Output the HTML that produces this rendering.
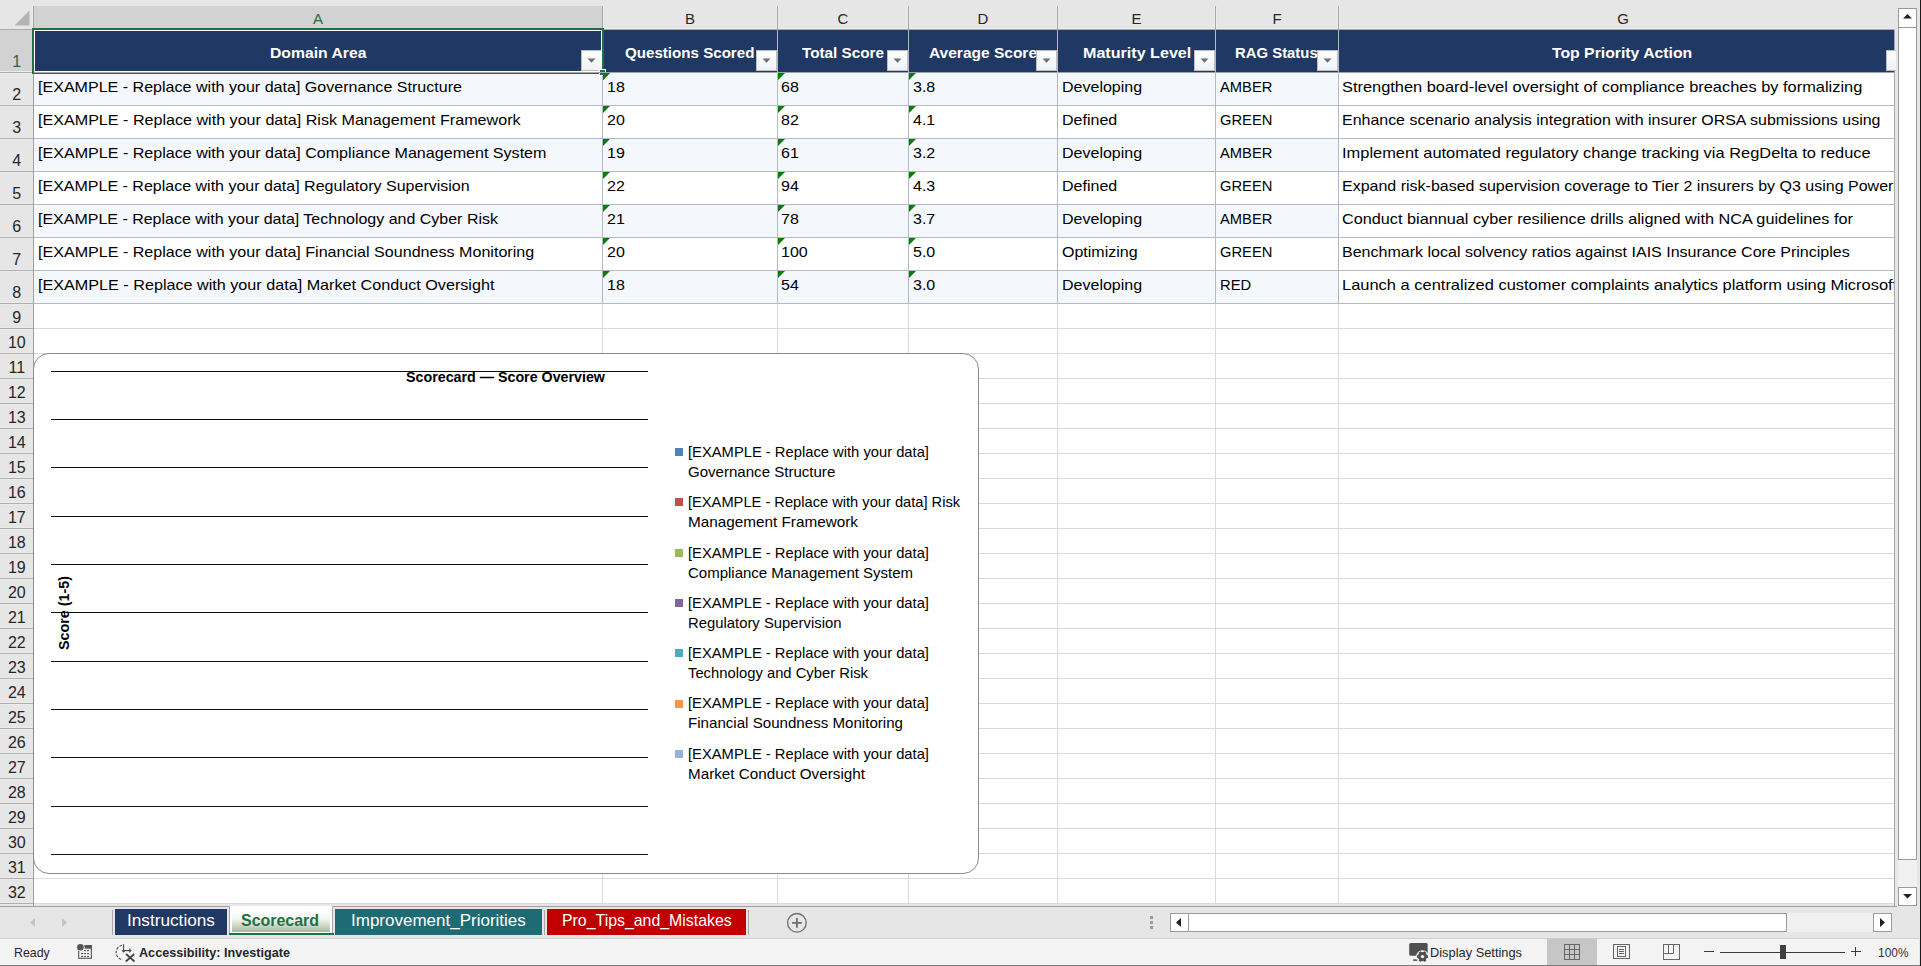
<!DOCTYPE html>
<html><head><meta charset="utf-8"><title>Scorecard</title>
<style>
html,body{margin:0;padding:0;}
body{width:1921px;height:966px;position:relative;overflow:hidden;background:#E6E6E6;font-family:"Liberation Sans",sans-serif;}
body div, body svg{position:absolute;}
body div div{position:absolute;}
.t{white-space:pre;}
</style></head><body>
<div style="left:0px;top:0px;width:1921px;height:966px;background:#E6E6E6;"></div>
<div style="left:34px;top:30px;width:1861px;height:874px;background:#FFFFFF;"></div>
<div style="left:0px;top:29px;width:1895px;height:1px;background:#ABABAB;"></div>
<div style="left:34px;top:6px;width:568px;height:23px;background:#D2D2D2;"></div>
<svg style="left:0;top:0" width="34" height="30"><polygon points="14.5,25.5 29.5,25.5 29.5,10.5" fill="#B4B4B4"/></svg>
<div style="left:34px;top:28px;width:1860px;height:1px;background:#ECECEC;"></div>
<div style="left:776px;top:6px;width:3px;height:22px;background:#ECECEC;"></div>
<div style="left:907px;top:6px;width:3px;height:22px;background:#ECECEC;"></div>
<div style="left:1056px;top:6px;width:3px;height:22px;background:#ECECEC;"></div>
<div style="left:1214px;top:6px;width:3px;height:22px;background:#ECECEC;"></div>
<div style="left:1337px;top:6px;width:3px;height:22px;background:#ECECEC;"></div>
<div style="left:603px;top:6px;width:1px;height:22px;background:#ECECEC;"></div>
<div style="left:32px;top:6px;width:1px;height:22px;background:#ECECEC;"></div>
<div style="left:34px;top:28px;width:568px;height:1px;background:#DCDCDC;"></div>
<div style="left:33px;top:6px;width:1px;height:23px;background:#A6A6A6;"></div>
<div style="left:602px;top:6px;width:1px;height:23px;background:#A6A6A6;"></div>
<div style="left:777px;top:6px;width:1px;height:23px;background:#A6A6A6;"></div>
<div style="left:908px;top:6px;width:1px;height:23px;background:#A6A6A6;"></div>
<div style="left:1057px;top:6px;width:1px;height:23px;background:#A6A6A6;"></div>
<div style="left:1215px;top:6px;width:1px;height:23px;background:#A6A6A6;"></div>
<div style="left:1338px;top:6px;width:1px;height:23px;background:#A6A6A6;"></div>
<div style="left:33px;top:30px;width:1px;height:876px;background:#A0A0A0;"></div>
<div style="left:0px;top:30px;width:33px;height:42px;background:#D2D2D2;"></div>
<div style="left:0px;top:71px;width:32px;height:1px;background:#EBEBEB;"></div>
<div style="left:0px;top:73px;width:32px;height:1px;background:#EBEBEB;"></div>
<div style="left:0px;top:72px;width:33px;height:1px;background:#AFAFAF;"></div>
<div style="left:0px;top:104px;width:32px;height:1px;background:#EBEBEB;"></div>
<div style="left:0px;top:106px;width:32px;height:1px;background:#EBEBEB;"></div>
<div style="left:0px;top:105px;width:33px;height:1px;background:#AFAFAF;"></div>
<div style="left:0px;top:137px;width:32px;height:1px;background:#EBEBEB;"></div>
<div style="left:0px;top:139px;width:32px;height:1px;background:#EBEBEB;"></div>
<div style="left:0px;top:138px;width:33px;height:1px;background:#AFAFAF;"></div>
<div style="left:0px;top:170px;width:32px;height:1px;background:#EBEBEB;"></div>
<div style="left:0px;top:172px;width:32px;height:1px;background:#EBEBEB;"></div>
<div style="left:0px;top:171px;width:33px;height:1px;background:#AFAFAF;"></div>
<div style="left:0px;top:203px;width:32px;height:1px;background:#EBEBEB;"></div>
<div style="left:0px;top:205px;width:32px;height:1px;background:#EBEBEB;"></div>
<div style="left:0px;top:204px;width:33px;height:1px;background:#AFAFAF;"></div>
<div style="left:0px;top:236px;width:32px;height:1px;background:#EBEBEB;"></div>
<div style="left:0px;top:238px;width:32px;height:1px;background:#EBEBEB;"></div>
<div style="left:0px;top:237px;width:33px;height:1px;background:#AFAFAF;"></div>
<div style="left:0px;top:269px;width:32px;height:1px;background:#EBEBEB;"></div>
<div style="left:0px;top:271px;width:32px;height:1px;background:#EBEBEB;"></div>
<div style="left:0px;top:270px;width:33px;height:1px;background:#AFAFAF;"></div>
<div style="left:0px;top:302px;width:32px;height:1px;background:#EBEBEB;"></div>
<div style="left:0px;top:304px;width:32px;height:1px;background:#EBEBEB;"></div>
<div style="left:0px;top:303px;width:33px;height:1px;background:#AFAFAF;"></div>
<div style="left:0px;top:327px;width:32px;height:1px;background:#EBEBEB;"></div>
<div style="left:0px;top:329px;width:32px;height:1px;background:#EBEBEB;"></div>
<div style="left:0px;top:328px;width:33px;height:1px;background:#AFAFAF;"></div>
<div style="left:0px;top:352px;width:32px;height:1px;background:#EBEBEB;"></div>
<div style="left:0px;top:354px;width:32px;height:1px;background:#EBEBEB;"></div>
<div style="left:0px;top:353px;width:33px;height:1px;background:#AFAFAF;"></div>
<div style="left:0px;top:377px;width:32px;height:1px;background:#EBEBEB;"></div>
<div style="left:0px;top:379px;width:32px;height:1px;background:#EBEBEB;"></div>
<div style="left:0px;top:378px;width:33px;height:1px;background:#AFAFAF;"></div>
<div style="left:0px;top:402px;width:32px;height:1px;background:#EBEBEB;"></div>
<div style="left:0px;top:404px;width:32px;height:1px;background:#EBEBEB;"></div>
<div style="left:0px;top:403px;width:33px;height:1px;background:#AFAFAF;"></div>
<div style="left:0px;top:427px;width:32px;height:1px;background:#EBEBEB;"></div>
<div style="left:0px;top:429px;width:32px;height:1px;background:#EBEBEB;"></div>
<div style="left:0px;top:428px;width:33px;height:1px;background:#AFAFAF;"></div>
<div style="left:0px;top:452px;width:32px;height:1px;background:#EBEBEB;"></div>
<div style="left:0px;top:454px;width:32px;height:1px;background:#EBEBEB;"></div>
<div style="left:0px;top:453px;width:33px;height:1px;background:#AFAFAF;"></div>
<div style="left:0px;top:477px;width:32px;height:1px;background:#EBEBEB;"></div>
<div style="left:0px;top:479px;width:32px;height:1px;background:#EBEBEB;"></div>
<div style="left:0px;top:478px;width:33px;height:1px;background:#AFAFAF;"></div>
<div style="left:0px;top:502px;width:32px;height:1px;background:#EBEBEB;"></div>
<div style="left:0px;top:504px;width:32px;height:1px;background:#EBEBEB;"></div>
<div style="left:0px;top:503px;width:33px;height:1px;background:#AFAFAF;"></div>
<div style="left:0px;top:527px;width:32px;height:1px;background:#EBEBEB;"></div>
<div style="left:0px;top:529px;width:32px;height:1px;background:#EBEBEB;"></div>
<div style="left:0px;top:528px;width:33px;height:1px;background:#AFAFAF;"></div>
<div style="left:0px;top:552px;width:32px;height:1px;background:#EBEBEB;"></div>
<div style="left:0px;top:554px;width:32px;height:1px;background:#EBEBEB;"></div>
<div style="left:0px;top:553px;width:33px;height:1px;background:#AFAFAF;"></div>
<div style="left:0px;top:577px;width:32px;height:1px;background:#EBEBEB;"></div>
<div style="left:0px;top:579px;width:32px;height:1px;background:#EBEBEB;"></div>
<div style="left:0px;top:578px;width:33px;height:1px;background:#AFAFAF;"></div>
<div style="left:0px;top:602px;width:32px;height:1px;background:#EBEBEB;"></div>
<div style="left:0px;top:604px;width:32px;height:1px;background:#EBEBEB;"></div>
<div style="left:0px;top:603px;width:33px;height:1px;background:#AFAFAF;"></div>
<div style="left:0px;top:627px;width:32px;height:1px;background:#EBEBEB;"></div>
<div style="left:0px;top:629px;width:32px;height:1px;background:#EBEBEB;"></div>
<div style="left:0px;top:628px;width:33px;height:1px;background:#AFAFAF;"></div>
<div style="left:0px;top:652px;width:32px;height:1px;background:#EBEBEB;"></div>
<div style="left:0px;top:654px;width:32px;height:1px;background:#EBEBEB;"></div>
<div style="left:0px;top:653px;width:33px;height:1px;background:#AFAFAF;"></div>
<div style="left:0px;top:677px;width:32px;height:1px;background:#EBEBEB;"></div>
<div style="left:0px;top:679px;width:32px;height:1px;background:#EBEBEB;"></div>
<div style="left:0px;top:678px;width:33px;height:1px;background:#AFAFAF;"></div>
<div style="left:0px;top:702px;width:32px;height:1px;background:#EBEBEB;"></div>
<div style="left:0px;top:704px;width:32px;height:1px;background:#EBEBEB;"></div>
<div style="left:0px;top:703px;width:33px;height:1px;background:#AFAFAF;"></div>
<div style="left:0px;top:727px;width:32px;height:1px;background:#EBEBEB;"></div>
<div style="left:0px;top:729px;width:32px;height:1px;background:#EBEBEB;"></div>
<div style="left:0px;top:728px;width:33px;height:1px;background:#AFAFAF;"></div>
<div style="left:0px;top:752px;width:32px;height:1px;background:#EBEBEB;"></div>
<div style="left:0px;top:754px;width:32px;height:1px;background:#EBEBEB;"></div>
<div style="left:0px;top:753px;width:33px;height:1px;background:#AFAFAF;"></div>
<div style="left:0px;top:777px;width:32px;height:1px;background:#EBEBEB;"></div>
<div style="left:0px;top:779px;width:32px;height:1px;background:#EBEBEB;"></div>
<div style="left:0px;top:778px;width:33px;height:1px;background:#AFAFAF;"></div>
<div style="left:0px;top:802px;width:32px;height:1px;background:#EBEBEB;"></div>
<div style="left:0px;top:804px;width:32px;height:1px;background:#EBEBEB;"></div>
<div style="left:0px;top:803px;width:33px;height:1px;background:#AFAFAF;"></div>
<div style="left:0px;top:827px;width:32px;height:1px;background:#EBEBEB;"></div>
<div style="left:0px;top:829px;width:32px;height:1px;background:#EBEBEB;"></div>
<div style="left:0px;top:828px;width:33px;height:1px;background:#AFAFAF;"></div>
<div style="left:0px;top:852px;width:32px;height:1px;background:#EBEBEB;"></div>
<div style="left:0px;top:854px;width:32px;height:1px;background:#EBEBEB;"></div>
<div style="left:0px;top:853px;width:33px;height:1px;background:#AFAFAF;"></div>
<div style="left:0px;top:877px;width:32px;height:1px;background:#EBEBEB;"></div>
<div style="left:0px;top:879px;width:32px;height:1px;background:#EBEBEB;"></div>
<div style="left:0px;top:878px;width:33px;height:1px;background:#AFAFAF;"></div>
<div style="left:0px;top:902px;width:32px;height:1px;background:#EBEBEB;"></div>
<div style="left:0px;top:904px;width:32px;height:1px;background:#EBEBEB;"></div>
<div style="left:0px;top:903px;width:33px;height:1px;background:#AFAFAF;"></div>
<div style="left:34px;top:328px;width:1861px;height:1px;background:#DADADA;"></div>
<div style="left:34px;top:353px;width:1861px;height:1px;background:#DADADA;"></div>
<div style="left:34px;top:378px;width:1861px;height:1px;background:#DADADA;"></div>
<div style="left:34px;top:403px;width:1861px;height:1px;background:#DADADA;"></div>
<div style="left:34px;top:428px;width:1861px;height:1px;background:#DADADA;"></div>
<div style="left:34px;top:453px;width:1861px;height:1px;background:#DADADA;"></div>
<div style="left:34px;top:478px;width:1861px;height:1px;background:#DADADA;"></div>
<div style="left:34px;top:503px;width:1861px;height:1px;background:#DADADA;"></div>
<div style="left:34px;top:528px;width:1861px;height:1px;background:#DADADA;"></div>
<div style="left:34px;top:553px;width:1861px;height:1px;background:#DADADA;"></div>
<div style="left:34px;top:578px;width:1861px;height:1px;background:#DADADA;"></div>
<div style="left:34px;top:603px;width:1861px;height:1px;background:#DADADA;"></div>
<div style="left:34px;top:628px;width:1861px;height:1px;background:#DADADA;"></div>
<div style="left:34px;top:653px;width:1861px;height:1px;background:#DADADA;"></div>
<div style="left:34px;top:678px;width:1861px;height:1px;background:#DADADA;"></div>
<div style="left:34px;top:703px;width:1861px;height:1px;background:#DADADA;"></div>
<div style="left:34px;top:728px;width:1861px;height:1px;background:#DADADA;"></div>
<div style="left:34px;top:753px;width:1861px;height:1px;background:#DADADA;"></div>
<div style="left:34px;top:778px;width:1861px;height:1px;background:#DADADA;"></div>
<div style="left:34px;top:803px;width:1861px;height:1px;background:#DADADA;"></div>
<div style="left:34px;top:828px;width:1861px;height:1px;background:#DADADA;"></div>
<div style="left:34px;top:853px;width:1861px;height:1px;background:#DADADA;"></div>
<div style="left:34px;top:878px;width:1861px;height:1px;background:#DADADA;"></div>
<div style="left:34px;top:903px;width:1861px;height:1px;background:#DADADA;"></div>
<div style="left:602px;top:304px;width:1px;height:600px;background:#DADADA;"></div>
<div style="left:777px;top:304px;width:1px;height:600px;background:#DADADA;"></div>
<div style="left:908px;top:304px;width:1px;height:600px;background:#DADADA;"></div>
<div style="left:1057px;top:304px;width:1px;height:600px;background:#DADADA;"></div>
<div style="left:1215px;top:304px;width:1px;height:600px;background:#DADADA;"></div>
<div style="left:1338px;top:304px;width:1px;height:600px;background:#DADADA;"></div>
<div style="left:34px;top:30px;width:1861px;height:42px;background:#203864;"></div>
<div style="left:34px;top:73px;width:1304px;height:32px;background:#F4F7FC;"></div>
<div style="left:34px;top:139px;width:1304px;height:32px;background:#F4F7FC;"></div>
<div style="left:34px;top:205px;width:1304px;height:32px;background:#F4F7FC;"></div>
<div style="left:34px;top:271px;width:1304px;height:32px;background:#F4F7FC;"></div>
<div style="left:34px;top:105px;width:1861px;height:1px;background:#B3BAC6;"></div>
<div style="left:34px;top:138px;width:1861px;height:1px;background:#B3BAC6;"></div>
<div style="left:34px;top:171px;width:1861px;height:1px;background:#B3BAC6;"></div>
<div style="left:34px;top:204px;width:1861px;height:1px;background:#B3BAC6;"></div>
<div style="left:34px;top:237px;width:1861px;height:1px;background:#B3BAC6;"></div>
<div style="left:34px;top:270px;width:1861px;height:1px;background:#B3BAC6;"></div>
<div style="left:34px;top:303px;width:1861px;height:1px;background:#B3BAC6;"></div>
<div style="left:34px;top:72px;width:1861px;height:1px;background:#9FA5AE;"></div>
<div style="left:602px;top:30px;width:1px;height:273px;background:#B3BAC6;"></div>
<div style="left:777px;top:30px;width:1px;height:273px;background:#B3BAC6;"></div>
<div style="left:908px;top:30px;width:1px;height:273px;background:#B3BAC6;"></div>
<div style="left:1057px;top:30px;width:1px;height:273px;background:#B3BAC6;"></div>
<div style="left:1215px;top:30px;width:1px;height:273px;background:#B3BAC6;"></div>
<div style="left:1338px;top:30px;width:1px;height:273px;background:#B3BAC6;"></div>
<div style="left:34px;top:903px;width:1861px;height:1px;background:#DADADA;"></div>
<div style="left:0px;top:906px;width:1897px;height:1px;background:#A0A0A0;"></div>
<div style="left:1894px;top:30px;width:1px;height:876px;background:#A6A6A6;"></div>
<div class="t" style="left:313.00px;top:11.00px;font-size:15px;line-height:15px;color:#1F6E43;">A</div>
<div class="t" style="left:685.00px;top:11.00px;font-size:15px;line-height:15px;color:#262626;">B</div>
<div class="t" style="left:837.59px;top:11.00px;font-size:15px;line-height:15px;color:#262626;">C</div>
<div class="t" style="left:977.59px;top:11.00px;font-size:15px;line-height:15px;color:#262626;">D</div>
<div class="t" style="left:1131.50px;top:11.00px;font-size:15px;line-height:15px;color:#262626;">E</div>
<div class="t" style="left:1272.42px;top:11.00px;font-size:15px;line-height:15px;color:#262626;">F</div>
<div class="t" style="left:1617.16px;top:11.00px;font-size:15px;line-height:15px;color:#262626;">G</div>
<div class="t" style="left:12.35px;top:54.00px;font-size:16px;line-height:16px;color:#1F6E43;">1</div>
<div class="t" style="left:12.35px;top:87.00px;font-size:16px;line-height:16px;color:#262626;">2</div>
<div class="t" style="left:12.35px;top:120.00px;font-size:16px;line-height:16px;color:#262626;">3</div>
<div class="t" style="left:12.35px;top:153.00px;font-size:16px;line-height:16px;color:#262626;">4</div>
<div class="t" style="left:12.35px;top:186.00px;font-size:16px;line-height:16px;color:#262626;">5</div>
<div class="t" style="left:12.35px;top:219.00px;font-size:16px;line-height:16px;color:#262626;">6</div>
<div class="t" style="left:12.35px;top:252.00px;font-size:16px;line-height:16px;color:#262626;">7</div>
<div class="t" style="left:12.35px;top:285.00px;font-size:16px;line-height:16px;color:#262626;">8</div>
<div class="t" style="left:12.35px;top:310.00px;font-size:16px;line-height:16px;color:#262626;">9</div>
<div class="t" style="left:7.89px;top:335.00px;font-size:16px;line-height:16px;color:#262626;">10</div>
<div class="t" style="left:8.49px;top:360.00px;font-size:16px;line-height:16px;color:#262626;">11</div>
<div class="t" style="left:7.89px;top:385.00px;font-size:16px;line-height:16px;color:#262626;">12</div>
<div class="t" style="left:7.89px;top:410.00px;font-size:16px;line-height:16px;color:#262626;">13</div>
<div class="t" style="left:7.89px;top:435.00px;font-size:16px;line-height:16px;color:#262626;">14</div>
<div class="t" style="left:7.89px;top:460.00px;font-size:16px;line-height:16px;color:#262626;">15</div>
<div class="t" style="left:7.89px;top:485.00px;font-size:16px;line-height:16px;color:#262626;">16</div>
<div class="t" style="left:7.89px;top:510.00px;font-size:16px;line-height:16px;color:#262626;">17</div>
<div class="t" style="left:7.89px;top:535.00px;font-size:16px;line-height:16px;color:#262626;">18</div>
<div class="t" style="left:7.89px;top:560.00px;font-size:16px;line-height:16px;color:#262626;">19</div>
<div class="t" style="left:7.89px;top:585.00px;font-size:16px;line-height:16px;color:#262626;">20</div>
<div class="t" style="left:7.89px;top:610.00px;font-size:16px;line-height:16px;color:#262626;">21</div>
<div class="t" style="left:7.89px;top:635.00px;font-size:16px;line-height:16px;color:#262626;">22</div>
<div class="t" style="left:7.89px;top:660.00px;font-size:16px;line-height:16px;color:#262626;">23</div>
<div class="t" style="left:7.89px;top:685.00px;font-size:16px;line-height:16px;color:#262626;">24</div>
<div class="t" style="left:7.89px;top:710.00px;font-size:16px;line-height:16px;color:#262626;">25</div>
<div class="t" style="left:7.89px;top:735.00px;font-size:16px;line-height:16px;color:#262626;">26</div>
<div class="t" style="left:7.89px;top:760.00px;font-size:16px;line-height:16px;color:#262626;">27</div>
<div class="t" style="left:7.89px;top:785.00px;font-size:16px;line-height:16px;color:#262626;">28</div>
<div class="t" style="left:7.89px;top:810.00px;font-size:16px;line-height:16px;color:#262626;">29</div>
<div class="t" style="left:7.89px;top:835.00px;font-size:16px;line-height:16px;color:#262626;">30</div>
<div class="t" style="left:7.89px;top:860.00px;font-size:16px;line-height:16px;color:#262626;">31</div>
<div class="t" style="left:7.89px;top:885.00px;font-size:16px;line-height:16px;color:#262626;">32</div>
<div class="t" style="left:269.75px;top:45.00px;font-size:15px;line-height:15px;color:#FFFFFF;font-weight:bold;transform:scaleX(1.0493);transform-origin:0 0;">Domain Area</div>
<div class="t" style="left:624.50px;top:45.00px;font-size:15px;line-height:15px;color:#FFFFFF;font-weight:bold;transform:scaleX(1.0081);transform-origin:0 0;">Questions Scored</div>
<div class="t" style="left:802.00px;top:45.00px;font-size:15px;line-height:15px;color:#FFFFFF;font-weight:bold;transform:scaleX(1.0176);transform-origin:0 0;">Total Score</div>
<div class="t" style="left:929.00px;top:45.00px;font-size:15px;line-height:15px;color:#FFFFFF;font-weight:bold;transform:scaleX(1.0335);transform-origin:0 0;">Average Score</div>
<div class="t" style="left:1082.65px;top:45.00px;font-size:15px;line-height:15px;color:#FFFFFF;font-weight:bold;transform:scaleX(1.0734);transform-origin:0 0;">Maturity Level</div>
<div class="t" style="left:1235.35px;top:45.00px;font-size:15px;line-height:15px;color:#FFFFFF;font-weight:bold;transform:scaleX(0.9923);transform-origin:0 0;">RAG Status</div>
<div class="t" style="left:1552.20px;top:45.00px;font-size:15px;line-height:15px;color:#FFFFFF;font-weight:bold;transform:scaleX(1.0515);transform-origin:0 0;">Top Priority Action</div>
<div style="left:581px;top:50px;width:19px;height:19px;border:1px solid #BEBEBE;background:linear-gradient(#FFFFFF,#EEF1F6)"></div>
<svg style="left:587px;top:58px" width="9" height="6"><polygon points="0.5,0.5 8.5,0.5 4.5,4.8" fill="#6E6E6E"/></svg>
<div style="left:756px;top:50px;width:19px;height:19px;border:1px solid #BEBEBE;background:linear-gradient(#FFFFFF,#EEF1F6)"></div>
<svg style="left:762px;top:58px" width="9" height="6"><polygon points="0.5,0.5 8.5,0.5 4.5,4.8" fill="#6E6E6E"/></svg>
<div style="left:887px;top:50px;width:19px;height:19px;border:1px solid #BEBEBE;background:linear-gradient(#FFFFFF,#EEF1F6)"></div>
<svg style="left:893px;top:58px" width="9" height="6"><polygon points="0.5,0.5 8.5,0.5 4.5,4.8" fill="#6E6E6E"/></svg>
<div style="left:1036px;top:50px;width:19px;height:19px;border:1px solid #BEBEBE;background:linear-gradient(#FFFFFF,#EEF1F6)"></div>
<svg style="left:1042px;top:58px" width="9" height="6"><polygon points="0.5,0.5 8.5,0.5 4.5,4.8" fill="#6E6E6E"/></svg>
<div style="left:1194px;top:50px;width:19px;height:19px;border:1px solid #BEBEBE;background:linear-gradient(#FFFFFF,#EEF1F6)"></div>
<svg style="left:1200px;top:58px" width="9" height="6"><polygon points="0.5,0.5 8.5,0.5 4.5,4.8" fill="#6E6E6E"/></svg>
<div style="left:1317px;top:50px;width:19px;height:19px;border:1px solid #BEBEBE;background:linear-gradient(#FFFFFF,#EEF1F6)"></div>
<svg style="left:1323px;top:58px" width="9" height="6"><polygon points="0.5,0.5 8.5,0.5 4.5,4.8" fill="#6E6E6E"/></svg>
<div style="left:1886px;top:50px;width:9px;height:19px;border:1px solid #BEBEBE;border-right:none;background:linear-gradient(#FFFFFF,#EEF1F6)"></div>
<div class="t" style="left:38.00px;top:79.00px;font-size:15px;line-height:15px;color:#000;transform:scaleX(1.0705);transform-origin:0 0;">[EXAMPLE - Replace with your data] Governance Structure</div>
<div class="t" style="left:606.50px;top:79.00px;font-size:15px;line-height:15px;color:#000;transform:scaleX(1.0674);transform-origin:0 0;">18</div>
<div class="t" style="left:781.00px;top:79.00px;font-size:15px;line-height:15px;color:#000;transform:scaleX(1.0674);transform-origin:0 0;">68</div>
<div class="t" style="left:912.50px;top:79.00px;font-size:15px;line-height:15px;color:#000;transform:scaleX(1.0674);transform-origin:0 0;">3.8</div>
<div class="t" style="left:1061.50px;top:79.00px;font-size:15px;line-height:15px;color:#000;transform:scaleX(1.0677);transform-origin:0 0;">Developing</div>
<div class="t" style="left:1219.50px;top:79.00px;font-size:15px;line-height:15px;color:#000;transform:scaleX(0.9817);transform-origin:0 0;">AMBER</div>
<div style="left:1339px;top:73px;width:555px;height:32px;overflow:hidden">
<div class="t" style="left:2.5px;top:6px;font-size:15px;line-height:15px;transform:scaleX(1.0928);transform-origin:0 0">Strengthen board-level oversight of compliance breaches by formalizing</div>
</div>
<svg style="left:603px;top:73px" width="8" height="8"><polygon points="0,0 7,0 0,7" fill="#008000"/></svg>
<svg style="left:778px;top:73px" width="8" height="8"><polygon points="0,0 7,0 0,7" fill="#008000"/></svg>
<svg style="left:909px;top:73px" width="8" height="8"><polygon points="0,0 7,0 0,7" fill="#008000"/></svg>
<div class="t" style="left:38.00px;top:112.00px;font-size:15px;line-height:15px;color:#000;transform:scaleX(1.0739);transform-origin:0 0;">[EXAMPLE - Replace with your data] Risk Management Framework</div>
<div class="t" style="left:606.50px;top:112.00px;font-size:15px;line-height:15px;color:#000;transform:scaleX(1.0674);transform-origin:0 0;">20</div>
<div class="t" style="left:781.00px;top:112.00px;font-size:15px;line-height:15px;color:#000;transform:scaleX(1.0674);transform-origin:0 0;">82</div>
<div class="t" style="left:912.50px;top:112.00px;font-size:15px;line-height:15px;color:#000;transform:scaleX(1.0674);transform-origin:0 0;">4.1</div>
<div class="t" style="left:1061.50px;top:112.00px;font-size:15px;line-height:15px;color:#000;transform:scaleX(1.0677);transform-origin:0 0;">Defined</div>
<div class="t" style="left:1219.50px;top:112.00px;font-size:15px;line-height:15px;color:#000;transform:scaleX(0.9820);transform-origin:0 0;">GREEN</div>
<div style="left:1339px;top:106px;width:555px;height:32px;overflow:hidden">
<div class="t" style="left:2.5px;top:6px;font-size:15px;line-height:15px;transform:scaleX(1.0639);transform-origin:0 0">Enhance scenario analysis integration with insurer ORSA submissions using</div>
</div>
<svg style="left:603px;top:106px" width="8" height="8"><polygon points="0,0 7,0 0,7" fill="#008000"/></svg>
<svg style="left:778px;top:106px" width="8" height="8"><polygon points="0,0 7,0 0,7" fill="#008000"/></svg>
<svg style="left:909px;top:106px" width="8" height="8"><polygon points="0,0 7,0 0,7" fill="#008000"/></svg>
<div class="t" style="left:38.00px;top:145.00px;font-size:15px;line-height:15px;color:#000;transform:scaleX(1.0718);transform-origin:0 0;">[EXAMPLE - Replace with your data] Compliance Management System</div>
<div class="t" style="left:606.50px;top:145.00px;font-size:15px;line-height:15px;color:#000;transform:scaleX(1.0674);transform-origin:0 0;">19</div>
<div class="t" style="left:781.00px;top:145.00px;font-size:15px;line-height:15px;color:#000;transform:scaleX(1.0674);transform-origin:0 0;">61</div>
<div class="t" style="left:912.50px;top:145.00px;font-size:15px;line-height:15px;color:#000;transform:scaleX(1.0674);transform-origin:0 0;">3.2</div>
<div class="t" style="left:1061.50px;top:145.00px;font-size:15px;line-height:15px;color:#000;transform:scaleX(1.0677);transform-origin:0 0;">Developing</div>
<div class="t" style="left:1219.50px;top:145.00px;font-size:15px;line-height:15px;color:#000;transform:scaleX(0.9817);transform-origin:0 0;">AMBER</div>
<div style="left:1339px;top:139px;width:555px;height:32px;overflow:hidden">
<div class="t" style="left:2.5px;top:6px;font-size:15px;line-height:15px;transform:scaleX(1.0951);transform-origin:0 0">Implement automated regulatory change tracking via RegDelta to reduce</div>
</div>
<svg style="left:603px;top:139px" width="8" height="8"><polygon points="0,0 7,0 0,7" fill="#008000"/></svg>
<svg style="left:778px;top:139px" width="8" height="8"><polygon points="0,0 7,0 0,7" fill="#008000"/></svg>
<svg style="left:909px;top:139px" width="8" height="8"><polygon points="0,0 7,0 0,7" fill="#008000"/></svg>
<div class="t" style="left:38.00px;top:178.00px;font-size:15px;line-height:15px;color:#000;transform:scaleX(1.0675);transform-origin:0 0;">[EXAMPLE - Replace with your data] Regulatory Supervision</div>
<div class="t" style="left:606.50px;top:178.00px;font-size:15px;line-height:15px;color:#000;transform:scaleX(1.0674);transform-origin:0 0;">22</div>
<div class="t" style="left:781.00px;top:178.00px;font-size:15px;line-height:15px;color:#000;transform:scaleX(1.0674);transform-origin:0 0;">94</div>
<div class="t" style="left:912.50px;top:178.00px;font-size:15px;line-height:15px;color:#000;transform:scaleX(1.0674);transform-origin:0 0;">4.3</div>
<div class="t" style="left:1061.50px;top:178.00px;font-size:15px;line-height:15px;color:#000;transform:scaleX(1.0677);transform-origin:0 0;">Defined</div>
<div class="t" style="left:1219.50px;top:178.00px;font-size:15px;line-height:15px;color:#000;transform:scaleX(0.9820);transform-origin:0 0;">GREEN</div>
<div style="left:1339px;top:172px;width:555px;height:32px;overflow:hidden">
<div class="t" style="left:2.5px;top:6px;font-size:15px;line-height:15px;transform:scaleX(1.0667);transform-origin:0 0">Expand risk-based supervision coverage to Tier 2 insurers by Q3 using Power</div>
</div>
<svg style="left:603px;top:172px" width="8" height="8"><polygon points="0,0 7,0 0,7" fill="#008000"/></svg>
<svg style="left:778px;top:172px" width="8" height="8"><polygon points="0,0 7,0 0,7" fill="#008000"/></svg>
<svg style="left:909px;top:172px" width="8" height="8"><polygon points="0,0 7,0 0,7" fill="#008000"/></svg>
<div class="t" style="left:38.00px;top:211.00px;font-size:15px;line-height:15px;color:#000;transform:scaleX(1.0657);transform-origin:0 0;">[EXAMPLE - Replace with your data] Technology and Cyber Risk</div>
<div class="t" style="left:606.50px;top:211.00px;font-size:15px;line-height:15px;color:#000;transform:scaleX(1.0674);transform-origin:0 0;">21</div>
<div class="t" style="left:781.00px;top:211.00px;font-size:15px;line-height:15px;color:#000;transform:scaleX(1.0674);transform-origin:0 0;">78</div>
<div class="t" style="left:912.50px;top:211.00px;font-size:15px;line-height:15px;color:#000;transform:scaleX(1.0674);transform-origin:0 0;">3.7</div>
<div class="t" style="left:1061.50px;top:211.00px;font-size:15px;line-height:15px;color:#000;transform:scaleX(1.0677);transform-origin:0 0;">Developing</div>
<div class="t" style="left:1219.50px;top:211.00px;font-size:15px;line-height:15px;color:#000;transform:scaleX(0.9817);transform-origin:0 0;">AMBER</div>
<div style="left:1339px;top:205px;width:555px;height:32px;overflow:hidden">
<div class="t" style="left:2.5px;top:6px;font-size:15px;line-height:15px;transform:scaleX(1.0827);transform-origin:0 0">Conduct biannual cyber resilience drills aligned with NCA guidelines for</div>
</div>
<svg style="left:603px;top:205px" width="8" height="8"><polygon points="0,0 7,0 0,7" fill="#008000"/></svg>
<svg style="left:778px;top:205px" width="8" height="8"><polygon points="0,0 7,0 0,7" fill="#008000"/></svg>
<svg style="left:909px;top:205px" width="8" height="8"><polygon points="0,0 7,0 0,7" fill="#008000"/></svg>
<div class="t" style="left:38.00px;top:244.00px;font-size:15px;line-height:15px;color:#000;transform:scaleX(1.0722);transform-origin:0 0;">[EXAMPLE - Replace with your data] Financial Soundness Monitoring</div>
<div class="t" style="left:606.50px;top:244.00px;font-size:15px;line-height:15px;color:#000;transform:scaleX(1.0674);transform-origin:0 0;">20</div>
<div class="t" style="left:781.00px;top:244.00px;font-size:15px;line-height:15px;color:#000;transform:scaleX(1.0674);transform-origin:0 0;">100</div>
<div class="t" style="left:912.50px;top:244.00px;font-size:15px;line-height:15px;color:#000;transform:scaleX(1.0674);transform-origin:0 0;">5.0</div>
<div class="t" style="left:1061.50px;top:244.00px;font-size:15px;line-height:15px;color:#000;transform:scaleX(1.0675);transform-origin:0 0;">Optimizing</div>
<div class="t" style="left:1219.50px;top:244.00px;font-size:15px;line-height:15px;color:#000;transform:scaleX(0.9820);transform-origin:0 0;">GREEN</div>
<div style="left:1339px;top:238px;width:555px;height:32px;overflow:hidden">
<div class="t" style="left:2.5px;top:6px;font-size:15px;line-height:15px;transform:scaleX(1.0684);transform-origin:0 0">Benchmark local solvency ratios against IAIS Insurance Core Principles</div>
</div>
<svg style="left:603px;top:238px" width="8" height="8"><polygon points="0,0 7,0 0,7" fill="#008000"/></svg>
<svg style="left:778px;top:238px" width="8" height="8"><polygon points="0,0 7,0 0,7" fill="#008000"/></svg>
<svg style="left:909px;top:238px" width="8" height="8"><polygon points="0,0 7,0 0,7" fill="#008000"/></svg>
<div class="t" style="left:38.00px;top:277.00px;font-size:15px;line-height:15px;color:#000;transform:scaleX(1.0777);transform-origin:0 0;">[EXAMPLE - Replace with your data] Market Conduct Oversight</div>
<div class="t" style="left:606.50px;top:277.00px;font-size:15px;line-height:15px;color:#000;transform:scaleX(1.0674);transform-origin:0 0;">18</div>
<div class="t" style="left:781.00px;top:277.00px;font-size:15px;line-height:15px;color:#000;transform:scaleX(1.0674);transform-origin:0 0;">54</div>
<div class="t" style="left:912.50px;top:277.00px;font-size:15px;line-height:15px;color:#000;transform:scaleX(1.0674);transform-origin:0 0;">3.0</div>
<div class="t" style="left:1061.50px;top:277.00px;font-size:15px;line-height:15px;color:#000;transform:scaleX(1.0677);transform-origin:0 0;">Developing</div>
<div class="t" style="left:1219.50px;top:277.00px;font-size:15px;line-height:15px;color:#000;transform:scaleX(0.9822);transform-origin:0 0;">RED</div>
<div style="left:1339px;top:271px;width:555px;height:32px;overflow:hidden">
<div class="t" style="left:2.5px;top:6px;font-size:15px;line-height:15px;transform:scaleX(1.0971);transform-origin:0 0">Launch a centralized customer complaints analytics platform using Microsoft</div>
</div>
<svg style="left:603px;top:271px" width="8" height="8"><polygon points="0,0 7,0 0,7" fill="#008000"/></svg>
<svg style="left:778px;top:271px" width="8" height="8"><polygon points="0,0 7,0 0,7" fill="#008000"/></svg>
<svg style="left:909px;top:271px" width="8" height="8"><polygon points="0,0 7,0 0,7" fill="#008000"/></svg>
<div style="left:32px;top:28px;width:572px;height:2px;background:#1E7145;"></div>
<div style="left:32px;top:28px;width:2px;height:46px;background:#1E7145;"></div>
<div style="left:602px;top:28px;width:2px;height:41px;background:#1E7145;"></div>
<div style="left:32px;top:73px;width:567px;height:1px;background:#1E7145;"></div>
<div style="left:34px;top:30px;width:568px;height:1px;background:#FFFFFF;"></div>
<div style="left:34px;top:71px;width:568px;height:1px;background:#FFFFFF;"></div>
<div style="left:34px;top:30px;width:1px;height:42px;background:#FFFFFF;"></div>
<div style="left:601px;top:30px;width:1px;height:42px;background:#FFFFFF;"></div>
<div style="left:599px;top:69px;width:7px;height:7px;background:#FFFFFF;"></div>
<div style="left:600px;top:70px;width:5px;height:5px;background:#1E7145;"></div>
<div style="left:34px;top:72px;width:572px;height:1px;background:#A3A8B0;"></div>
<svg style="left:603px;top:73px" width="8" height="8"><polygon points="0,0 7,0 0,7" fill="#008000"/></svg>
<div style="left:33px;top:353px;width:944px;height:519px;border:1px solid #8A8A8A;border-radius:16px;background:#FFFFFF"></div>
<div style="left:51px;top:371px;width:597px;height:1px;background:#0D0D0D;"></div>
<div style="left:51px;top:419px;width:597px;height:1px;background:#0D0D0D;"></div>
<div style="left:51px;top:467px;width:597px;height:1px;background:#0D0D0D;"></div>
<div style="left:51px;top:516px;width:597px;height:1px;background:#0D0D0D;"></div>
<div style="left:51px;top:564px;width:597px;height:1px;background:#0D0D0D;"></div>
<div style="left:51px;top:612px;width:597px;height:1px;background:#0D0D0D;"></div>
<div style="left:51px;top:661px;width:597px;height:1px;background:#0D0D0D;"></div>
<div style="left:51px;top:709px;width:597px;height:1px;background:#0D0D0D;"></div>
<div style="left:51px;top:757px;width:597px;height:1px;background:#0D0D0D;"></div>
<div style="left:51px;top:806px;width:597px;height:1px;background:#0D0D0D;"></div>
<div style="left:51px;top:854px;width:597px;height:1px;background:#0D0D0D;"></div>
<div class="t" style="left:406.00px;top:369.00px;font-size:15px;line-height:15px;color:#000;font-weight:bold;transform:scaleX(0.9507);transform-origin:0 0;">Scorecard — Score Overview</div>
<div class="t" style="left:63px;top:612.5px;width:0;height:0"><div class="t" style="left:0;top:0;transform:translate(-50%,-50%) rotate(-90deg) scaleX(0.955);font-size:15px;line-height:15px;font-weight:bold;white-space:nowrap">Score (1-5)</div></div>
<div style="left:675px;top:448.0px;width:8px;height:8px;background:#4F81BD"></div>
<div class="t" style="left:688.00px;top:444.00px;font-size:15px;line-height:15px;color:#000000;transform:scaleX(0.9831);transform-origin:0 0;">[EXAMPLE - Replace with your data]</div>
<div class="t" style="left:688.00px;top:464.00px;font-size:15px;line-height:15px;color:#000000;transform:scaleX(1.0035);transform-origin:0 0;">Governance Structure</div>
<div style="left:675px;top:498.3px;width:8px;height:8px;background:#C0504D"></div>
<div class="t" style="left:688.00px;top:494.00px;font-size:15px;line-height:15px;color:#000000;transform:scaleX(0.9771);transform-origin:0 0;">[EXAMPLE - Replace with your data] Risk</div>
<div class="t" style="left:688.00px;top:514.00px;font-size:15px;line-height:15px;color:#000000;transform:scaleX(1.0194);transform-origin:0 0;">Management Framework</div>
<div style="left:675px;top:548.6px;width:8px;height:8px;background:#9BBB59"></div>
<div class="t" style="left:688.00px;top:545.00px;font-size:15px;line-height:15px;color:#000000;transform:scaleX(0.9831);transform-origin:0 0;">[EXAMPLE - Replace with your data]</div>
<div class="t" style="left:688.00px;top:565.00px;font-size:15px;line-height:15px;color:#000000;">Compliance Management System</div>
<div style="left:675px;top:598.9px;width:8px;height:8px;background:#8064A2"></div>
<div class="t" style="left:688.00px;top:595.00px;font-size:15px;line-height:15px;color:#000000;transform:scaleX(0.9831);transform-origin:0 0;">[EXAMPLE - Replace with your data]</div>
<div class="t" style="left:688.00px;top:615.00px;font-size:15px;line-height:15px;color:#000000;transform:scaleX(0.9897);transform-origin:0 0;">Regulatory Supervision</div>
<div style="left:675px;top:649.2px;width:8px;height:8px;background:#4BACC6"></div>
<div class="t" style="left:688.00px;top:645.00px;font-size:15px;line-height:15px;color:#000000;transform:scaleX(0.9831);transform-origin:0 0;">[EXAMPLE - Replace with your data]</div>
<div class="t" style="left:688.00px;top:665.00px;font-size:15px;line-height:15px;color:#000000;transform:scaleX(0.9857);transform-origin:0 0;">Technology and Cyber Risk</div>
<div style="left:675px;top:699.5px;width:8px;height:8px;background:#F79646"></div>
<div class="t" style="left:688.00px;top:695.00px;font-size:15px;line-height:15px;color:#000000;transform:scaleX(0.9831);transform-origin:0 0;">[EXAMPLE - Replace with your data]</div>
<div class="t" style="left:688.00px;top:715.00px;font-size:15px;line-height:15px;color:#000000;transform:scaleX(1.0072);transform-origin:0 0;">Financial Soundness Monitoring</div>
<div style="left:675px;top:749.8px;width:8px;height:8px;background:#95B3D7"></div>
<div class="t" style="left:688.00px;top:746.00px;font-size:15px;line-height:15px;color:#000000;transform:scaleX(0.9831);transform-origin:0 0;">[EXAMPLE - Replace with your data]</div>
<div class="t" style="left:688.00px;top:766.00px;font-size:15px;line-height:15px;color:#000000;transform:scaleX(1.0156);transform-origin:0 0;">Market Conduct Oversight</div>
<div style="left:1897px;top:6px;width:22px;height:900px;background:#E6E6E6;"></div>
<div style="left:1898px;top:8px;width:17px;height:18px;border:1px solid #9A9A9A;background:#FFFFFF"></div>
<svg style="left:1902px;top:13px" width="11" height="7"><polygon points="1,5.5 10,5.5 5.5,1" fill="#222"/></svg>
<div style="left:1898px;top:27px;width:17px;height:831px;border:1px solid #9A9A9A;background:#FFFFFF"></div>
<div style="left:1898px;top:860px;width:19px;height:27px;background:#F0F0F0;"></div>
<div style="left:1898px;top:887px;width:17px;height:17px;border:1px solid #9A9A9A;background:#FFFFFF"></div>
<svg style="left:1902px;top:893px" width="11" height="7"><polygon points="1,1 10,1 5.5,5.5" fill="#222"/></svg>
<div style="left:0px;top:907px;width:1919px;height:31px;background:#E6E6E6;"></div>
<div style="left:0px;top:938px;width:1919px;height:1px;background:#CFCFCF;"></div>
<svg style="left:28px;top:914px" width="12" height="14"><polygon points="7,4 7,13 2,8.5" fill="#C4C4C4"/></svg>
<svg style="left:58px;top:914px" width="12" height="14"><polygon points="4,4 4,13 9,8.5" fill="#C4C4C4"/></svg>
<div style="left:112px;top:910px;width:1px;height:25px;background:#A8A8A8;"></div>
<div style="left:115px;top:909px;width:112px;height:26px;background:#203864;"></div>
<div class="t" style="left:127.05px;top:912.00px;font-size:17px;line-height:17px;color:#FFFFFF;transform:scaleX(1.0114);transform-origin:0 0;">Instructions</div>
<div style="left:229px;top:906px;width:102px;height:28px;border:1px solid #A8A8A8;border-top:none;border-bottom:none;background:#FFFFFF"></div>
<div style="left:232px;top:910px;width:98px;height:22px;background:linear-gradient(#FFFFFF 0%,#F4F6F2 40%,#A9B8A3 100%)"></div>
<div style="left:229px;top:933px;width:105px;height:2px;background:#1E7145;"></div>
<div class="t" style="left:241.30px;top:912.00px;font-size:17px;line-height:17px;color:#1E7145;font-weight:bold;transform:scaleX(0.9380);transform-origin:0 0;">Scorecard</div>
<div style="left:335px;top:909px;width:207px;height:26px;background:#1E6B73;"></div>
<div class="t" style="left:351.00px;top:912.00px;font-size:17px;line-height:17px;color:#FFFFFF;">Improvement_Priorities</div>
<div style="left:544px;top:910px;width:1px;height:25px;background:#A8A8A8;"></div>
<div style="left:547px;top:909px;width:199px;height:26px;background:#C00000;"></div>
<div class="t" style="left:561.85px;top:912.00px;font-size:17px;line-height:17px;color:#FFFFFF;transform:scaleX(0.9338);transform-origin:0 0;">Pro_Tips_and_Mistakes</div>
<div style="left:748px;top:910px;width:1px;height:25px;background:#A8A8A8;"></div>
<svg style="left:785px;top:911px" width="24" height="24"><circle cx="11.9" cy="11.8" r="9.3" fill="none" stroke="#6E6E6E" stroke-width="1.3"/><path d="M11.9 7.1v9.6M7.1 11.9h9.8" stroke="#6E6E6E" stroke-width="1.8"/></svg>
<div style="left:1150px;top:916px;width:3px;height:3px;background:#9A9A9A;"></div>
<div style="left:1150px;top:921px;width:3px;height:3px;background:#9A9A9A;"></div>
<div style="left:1150px;top:926px;width:3px;height:3px;background:#9A9A9A;"></div>
<div style="left:1170px;top:913px;width:703px;height:19px;background:#F0F0F0;"></div>
<div style="left:1170px;top:913px;width:17px;height:17px;border:1px solid #9A9A9A;background:#FFFFFF"></div>
<svg style="left:1174px;top:916px" width="10" height="13"><polygon points="7,2 7,11 2,6.5" fill="#222"/></svg>
<div style="left:1188px;top:913px;width:597px;height:17px;border:1px solid #9A9A9A;background:#FFFFFF"></div>
<div style="left:1873px;top:913px;width:17px;height:17px;border:1px solid #9A9A9A;background:#FFFFFF"></div>
<svg style="left:1877px;top:916px" width="10" height="13"><polygon points="3,2 3,11 8,6.5" fill="#222"/></svg>
<div style="left:0px;top:939px;width:1919px;height:26px;background:#F3F3F3;"></div>
<div style="left:0px;top:965px;width:1921px;height:1px;background:#7A7A7A;"></div>
<div style="left:1920px;top:0px;width:1px;height:966px;background:#1A1A1A;"></div>
<div class="t" style="left:14.20px;top:946.00px;font-size:13px;line-height:13px;color:#262626;transform:scaleX(0.9523);transform-origin:0 0;">Ready</div>
<svg style="left:70px;top:940px" width="30" height="24"><rect x="8.7" y="6.1" width="12.7" height="12.2" fill="none" stroke="#555" stroke-width="1.1"/><rect x="14.6" y="5" width="7.3" height="3.7" fill="#555"/><circle cx="10.4" cy="7.3" r="3.9" fill="#F3F3F3"/><circle cx="10.4" cy="7.3" r="3.3" fill="#555"/><g fill="#555"><rect x="13.9" y="10.1" width="2" height="1.1"/><rect x="17" y="10.1" width="2" height="1.1"/><rect x="11" y="13" width="2" height="1.1"/><rect x="13.9" y="13" width="2" height="1.1"/><rect x="17" y="13" width="2" height="1.1"/><rect x="11" y="15.9" width="2" height="1.1"/><rect x="13.9" y="15.9" width="2" height="1.1"/><rect x="17" y="15.9" width="2" height="1.1"/></g></svg>
<svg style="left:110px;top:940px" width="30" height="24"><path d="M11.9 5.3 A7.3 7.3 0 0 0 12.7 19.7" fill="none" stroke="#444" stroke-width="1.1" stroke-dasharray="2.6 1.4"/><path d="M13.6 4.2v7" stroke="#444" stroke-width="1.1"/><path d="M11.3 10.2h4.6l-2.3 2.6z" fill="#444"/><path d="M14.2 10.6h5.8" stroke="#444" stroke-width="1.1"/><path d="M19.3 8.3v4.6l2.4-2.3z" fill="#444"/><path d="M16 14l8.5 7.5M24.2 14l-8.4 7.5" stroke="#444" stroke-width="1.7"/></svg>
<div class="t" style="left:139.00px;top:946.00px;font-size:13px;line-height:13px;color:#262626;font-weight:bold;transform:scaleX(0.9719);transform-origin:0 0;">Accessibility: Investigate</div>
<svg style="left:1400px;top:938px" width="40" height="27"><rect x="9.2" y="5.1" width="18.5" height="12.7" rx="1.6" fill="#505050"/><rect x="13.2" y="21.3" width="4.3" height="1.6" fill="#505050"/><circle cx="22.5" cy="18.6" r="6.4" fill="#F3F3F3"/><g fill="#505050"><rect x="21.2" y="13.1" width="2.6" height="11" transform="rotate(30 22.5 18.6)"/><rect x="21.2" y="13.1" width="2.6" height="11" transform="rotate(90 22.5 18.6)"/><rect x="21.2" y="13.1" width="2.6" height="11" transform="rotate(150 22.5 18.6)"/><circle cx="22.5" cy="18.6" r="4.6"/></g><circle cx="22.5" cy="18.6" r="1.7" fill="#F3F3F3"/></svg>
<div class="t" style="left:1430.00px;top:946.00px;font-size:13px;line-height:13px;color:#262626;transform:scaleX(0.9868);transform-origin:0 0;">Display Settings</div>
<div style="left:1547px;top:939px;width:50px;height:26px;background:#C6C6C6;"></div>
<svg style="left:1563px;top:943px" width="18" height="18"><g fill="none" stroke="#666" stroke-width="1"><rect x="1.5" y="1.5" width="15" height="15"/><path d="M6.5 1.5v15M11.5 1.5v15M1.5 6.5h15M1.5 11.5h15"/></g></svg>
<svg style="left:1612px;top:943px" width="20" height="18"><g fill="none" stroke="#666" stroke-width="1"><rect x="1.5" y="1.5" width="16" height="14"/><rect x="5.5" y="3.5" width="8" height="10"/><path d="M7 6.5h5M7 8.5h5M7 10.5h5"/></g></svg>
<svg style="left:1662px;top:943px" width="20" height="18"><g fill="none" stroke="#666" stroke-width="1"><rect x="1.5" y="1.5" width="16" height="15"/><path d="M1.5 10.5h10v-9M6.5 1.5v9"/></g></svg>
<div style="left:1704px;top:951px;width:10px;height:1px;background:#3A3A3A;"></div>
<div style="left:1720px;top:952px;width:125px;height:1px;background:#3A3A3A;"></div>
<div style="left:1780px;top:945px;width:6px;height:14px;background:#404040;"></div>
<div style="left:1851px;top:951px;width:10px;height:1px;background:#3A3A3A;"></div>
<div style="left:1855px;top:947px;width:1px;height:9px;background:#3A3A3A;"></div>
<div class="t" style="left:1877.50px;top:946.00px;font-size:13px;line-height:13px;color:#333333;transform:scaleX(0.9169);transform-origin:0 0;">100%</div>
</body></html>
